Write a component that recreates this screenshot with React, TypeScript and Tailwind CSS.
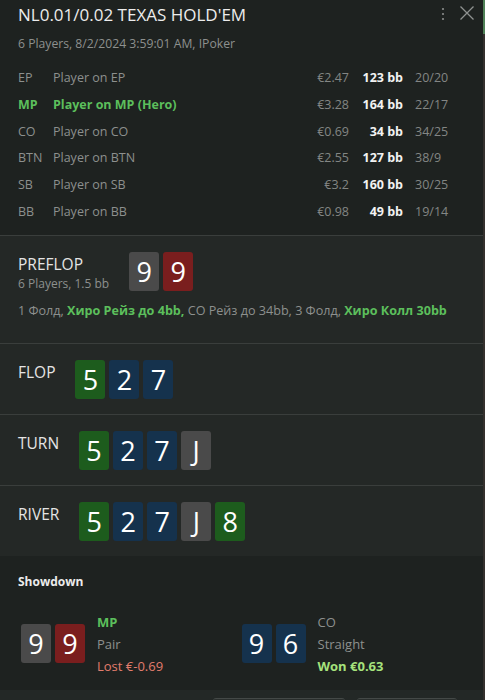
import { Fragment } from "react";

type Suit = "s" | "h" | "d" | "c";

interface PlayerRow {
  pos: string;
  name: string;
  amount: string;
  bb: string;
  hands: string;
  hero?: boolean;
}

const PLAYERS: PlayerRow[] = [
  { pos: "EP", name: "Player on EP", amount: "€2.47", bb: "123 bb", hands: "20/20" },
  { pos: "MP", name: "Player on MP (Hero)", amount: "€3.28", bb: "164 bb", hands: "22/17", hero: true },
  { pos: "CO", name: "Player on CO", amount: "€0.69", bb: "34 bb", hands: "34/25" },
  { pos: "BTN", name: "Player on BTN", amount: "€2.55", bb: "127 bb", hands: "38/9" },
  { pos: "SB", name: "Player on SB", amount: "€3.2", bb: "160 bb", hands: "30/25" },
  { pos: "BB", name: "Player on BB", amount: "€0.98", bb: "49 bb", hands: "19/14" },
];

const SUIT_BG: Record<Suit, string> = {
  s: "bg-[#4a4a4a]",
  h: "bg-[#7a1e1e]",
  d: "bg-[#15324d]",
  c: "bg-[#1d5c1d]",
};

function Card({ rank, suit }: { rank: string; suit: Suit }) {
  return (
    <div
      className={`w-[30px] h-[39px] rounded-[3px] flex items-center justify-center text-[27px] leading-none text-white ${SUIT_BG[suit]}`}
    >
      {rank}
    </div>
  );
}

function Board({ cards }: { cards: [string, Suit][] }) {
  return (
    <div className="flex gap-[4px]">
      {cards.map(([r, s], i) => (
        <Card key={i} rank={r} suit={s} />
      ))}
    </div>
  );
}

const FLOP: [string, Suit][] = [
  ["5", "c"],
  ["2", "d"],
  ["7", "d"],
];
const TURN: [string, Suit][] = [...FLOP, ["J", "s"]];
const RIVER: [string, Suit][] = [...TURN, ["8", "c"]];

function Street({ label, cards }: { label: string; cards: [string, Suit][] }) {
  return (
    <div className="border-t border-[#3a3e3c] bg-[#242826] px-[18px] pt-4 pb-[15px] flex items-start gap-5">
      <div className="text-[15.5px] leading-[22px] text-[#e4e4e4] mt-[1px]">{label}</div>
      <Board cards={cards} />
    </div>
  );
}

function ShowdownHand({
  cards,
  pos,
  hand,
  result,
  won,
  hero,
}: {
  cards: [string, Suit][];
  pos: string;
  hand: string;
  result: string;
  won?: boolean;
  hero?: boolean;
}) {
  return (
    <div className="flex items-center gap-3">
      <Board cards={cards} />
      <div className="text-[13px] leading-[22px]">
        <div className={hero ? "font-bold text-[#5cbf5c]" : "text-[#8d908e]"}>{pos}</div>
        <div className="text-[#8d908e]">{hand}</div>
        <div className={won ? "font-bold text-[#a6e27c]" : "text-[#e27d6d]"}>{result}</div>
      </div>
    </div>
  );
}

export default function App() {
  return (
    <div className="w-[485px] h-[700px] overflow-hidden flex bg-[#1e2220] font-['Segoe_UI','Open_Sans',sans-serif]">
      <div className="flex-1 min-w-0">
        {/* Header */}
        <div className="bg-[#1e2220] px-[18px] pt-[3px] pb-[9px] relative">
          <div className="text-[17px] leading-[24px] text-[#ececec]">NL0.01/0.02 TEXAS HOLD'EM</div>
          <div className="text-[12.2px] leading-[20px] text-[#8d908e] mt-[7px]">
            6 Players, 8/2/2024 3:59:01 AM, IPoker
          </div>

          <div className="absolute right-[9px] top-[6px] flex items-start gap-[15px]">
            <svg width="4" height="14" viewBox="0 0 4 14" className="mt-[1px]">
              <circle cx="2" cy="2" r="1.1" fill="#8a8d8b" />
              <circle cx="2" cy="7" r="1.1" fill="#8a8d8b" />
              <circle cx="2" cy="12" r="1.1" fill="#8a8d8b" />
            </svg>
            <svg width="14" height="14" viewBox="0 0 14 14">
              <path d="M0.5 0.5 L13.5 13.5 M13.5 0.5 L0.5 13.5" stroke="#8f9290" strokeWidth="1.3" />
            </svg>
          </div>

          <div className="mt-[11px] text-[12.5px]">
            {PLAYERS.map((p) => (
              <div key={p.pos} className="flex items-center h-[26.8px]">
                <div className={`w-[35px] ${p.hero ? "font-bold text-[#5cbf5c]" : "text-[#8d908e]"}`}>{p.pos}</div>
                <div className={`flex-1 ${p.hero ? "font-bold text-[#5cbf5c]" : "text-[#8d908e]"}`}>{p.name}</div>
                <div className="text-right text-[#838684]">{p.amount}</div>
                <div className="w-[54px] text-right font-bold text-[#f2f2f2]">{p.bb}</div>
                <div className="w-[62px] pl-3 text-[#838684]">{p.hands}</div>
              </div>
            ))}
          </div>
        </div>

        {/* Preflop */}
        <div className="border-t border-[#3a3e3c] bg-[#242826] px-[18px] pt-4 pb-[22px]">
          <div className="flex items-start gap-5">
            <div>
              <div className="text-[15.5px] leading-[22px] text-[#e4e4e4] mt-[1px]">PREFLOP</div>
              <div className="text-[12px] leading-[18px] text-[#8d908e]">6 Players, 1.5 bb</div>
            </div>
            <Board
              cards={[
                ["9", "s"],
                ["9", "h"],
              ]}
            />
          </div>
          <div className="mt-2 text-[12.6px] leading-[20px] text-[#8d908e]">
            {[
              { t: "1 Фолд, ", g: false },
              { t: "Хиро Рейз до 4bb,", g: true },
              { t: " CO Рейз до 34bb, 3 Фолд, ", g: false },
              { t: "Хиро Колл 30bb", g: true },
            ].map((s, i) => (
              <Fragment key={i}>
                {s.g ? <span className="font-bold text-[#5cbf5c]">{s.t}</span> : <span>{s.t}</span>}
              </Fragment>
            ))}
          </div>
        </div>

        <Street label="FLOP" cards={FLOP} />
        <Street label="TURN" cards={TURN} />
        <Street label="RIVER" cards={RIVER} />

        {/* Showdown */}
        <div className="bg-[#1e2220] pt-4 pb-[13px]">
          <div className="px-[18px] text-[12px] leading-[20px] font-bold text-[#ececec]">Showdown</div>
          <div className="mt-[19px] px-[21px] grid grid-cols-2">
            <ShowdownHand
              cards={[
                ["9", "s"],
                ["9", "h"],
              ]}
              pos="MP"
              hand="Pair"
              result="Lost €-0.69"
              hero
            />
            <ShowdownHand
              cards={[
                ["9", "d"],
                ["6", "d"],
              ]}
              pos="CO"
              hand="Straight"
              result="Won €0.63"
              won
            />
          </div>
        </div>

        {/* Footer */}
        <div className="bg-[#232826] pt-[8px] pl-[213px] flex gap-3">
          <div className="w-[132px] h-[30px] rounded-[3px] bg-[#2a2f2d] border-t border-[#444947]" />
          <div className="w-[100px] h-[30px] rounded-[3px] bg-[#2a2f2d] border-t border-[#444947]" />
        </div>
      </div>

      {/* Scrollbar */}
      <div className="w-[2px] h-full bg-[#34302d] flex flex-col">
        <div className="h-[34px] bg-[#4f8056]" />
      </div>
    </div>
  );
}
